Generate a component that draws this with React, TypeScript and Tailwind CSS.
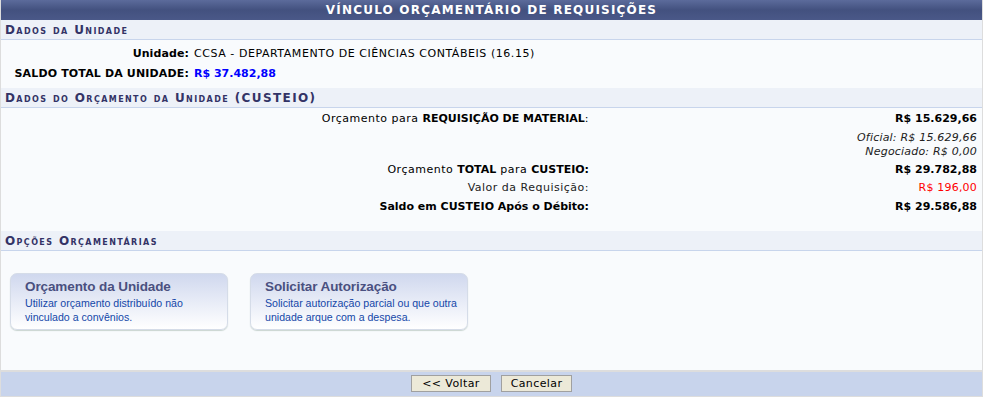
import React from "react";

const V = { fontFamily: '"DejaVu Sans", Verdana, sans-serif' };
const A = { fontFamily: '"Liberation Sans", Arial, sans-serif' };

function SectionHeader({ children }: { children: React.ReactNode }) {
  return (
    <div
      className="h-[20px] bg-[#EDF1F8] border-b border-[#C8D5EC] pl-[4px] flex items-center text-[12px] font-bold text-[#333366] tracking-[1.4px]"
      style={{ ...V, fontVariant: "small-caps" }}
    >
      {children}
    </div>
  );
}

function Card({ title, desc }: { title: string; desc: string }) {
  return (
    <div
      className="w-[218px] h-[57px] rounded-[7px] border border-[#D5DCE8] bg-gradient-to-b from-[#D0D8EE] to-[#FFFFFF] shadow-[0_1px_1px_#C9D4D0] pl-[14px] pr-[2px] pt-[4px]"
      style={A}
    >
      <div className="text-[13.5px] font-bold text-[#4A5080] leading-[17px] tracking-[-0.1px]">{title}</div>
      <div className="text-[10.6px] text-[#1447A8] leading-[14px] mt-[1px]">{desc}</div>
    </div>
  );
}

export default function App() {
  return (
    <div className="w-[984px] h-[397px] bg-white" style={V}>
      <div className="w-[983px] h-[397px] border border-[#DDDDDD] border-t-0 bg-[#F9FBFD] flex flex-col">
        <div className="h-[20px] bg-gradient-to-b from-[#5C6B9B] via-[#43517F] to-[#4A5888] text-white text-[12px] font-bold tracking-[1.2px] flex items-center justify-center">
          VÍNCULO ORÇAMENTÁRIO DE REQUISIÇÕES
        </div>
        <SectionHeader>Dados da Unidade</SectionHeader>
        <div className="pt-[5px] h-[48px] text-[11px] text-black">
          <div className="flex h-[19px] items-center">
            <div className="w-[193px] text-right pr-[5px] font-bold tracking-[0.1px]">Unidade:</div>
            <div className="tracking-[0.55px]">CCSA - DEPARTAMENTO DE CIÊNCIAS CONTÁBEIS (16.15)</div>
          </div>
          <div className="flex h-[20px] items-center">
            <div className="w-[193px] text-right pr-[5px] font-bold tracking-[0.15px]">SALDO TOTAL DA UNIDADE:</div>
            <div className="font-bold text-[#0000FF]">R$ 37.482,88</div>
          </div>
        </div>
        <SectionHeader>Dados do Orçamento da Unidade (CUSTEIO)</SectionHeader>
        <div className="h-[123px] text-[11px] text-black pt-[2px]">
          <div className="flex h-[18px] items-center">
            <div className="w-[590px] text-right pr-[2px] tracking-[0.5px]">
              Orçamento para <b className="tracking-normal">REQUISIÇÃO DE MATERIAL</b>:
            </div>
            <div className="flex-1 text-right pr-[5px] font-bold">R$ 15.629,66</div>
          </div>
          <div className="flex flex-col items-end pr-[5px] italic text-[#222222] leading-[14px] pt-[3px] pb-[2px] tracking-[0.2px]">
            <div>Oficial: R$ 15.629,66</div>
            <div>Negociado: R$ 0,00</div>
          </div>
          <div className="flex h-[18px] items-center">
            <div className="w-[590px] text-right pr-[2px] tracking-[0.5px]">
              Orçamento <b className="tracking-normal">TOTAL</b> para <b className="tracking-normal">CUSTEIO:</b>
            </div>
            <div className="flex-1 text-right pr-[5px] font-bold">R$ 29.782,88</div>
          </div>
          <div className="flex h-[19px] items-center">
            <div className="w-[590px] text-right pr-[2px] text-[#222222] tracking-[0.5px]">Valor da Requisição:</div>
            <div className="flex-1 text-right pr-[5px] text-[#FF0000] tracking-[0.2px]">R$ 196,00</div>
          </div>
          <div className="flex h-[19px] items-center">
            <div className="w-[590px] text-right pr-[2px] font-bold">Saldo em CUSTEIO Após o Débito:</div>
            <div className="flex-1 text-right pr-[5px] font-bold">R$ 29.586,88</div>
          </div>
        </div>
        <SectionHeader>Opções Orçamentárias</SectionHeader>
        <div className="flex-1 flex gap-[22px] pl-[9px] pt-[22px]">
          <Card title="Orçamento da Unidade" desc="Utilizar orçamento distribuído não vinculado a convênios." />
          <Card title="Solicitar Autorização" desc="Solicitar autorização parcial ou que outra unidade arque com a despesa." />
        </div>
        <div className="h-[26px] border-t-2 border-[#DDDDDD] bg-[#C8D4EC] flex items-start justify-center gap-[10px] pt-[3px]">
          <button className="w-[80px] h-[17px] bg-[#ECE9D8] border border-[#A0A0A0] text-[11px] text-black leading-[15px] tracking-[0.4px]" style={V}>
            &lt;&lt; Voltar
          </button>
          <button className="w-[71px] h-[17px] bg-[#ECE9D8] border border-[#A0A0A0] text-[11px] text-black leading-[15px] tracking-[0.4px]" style={V}>
            Cancelar
          </button>
        </div>
      </div>
    </div>
  );
}
